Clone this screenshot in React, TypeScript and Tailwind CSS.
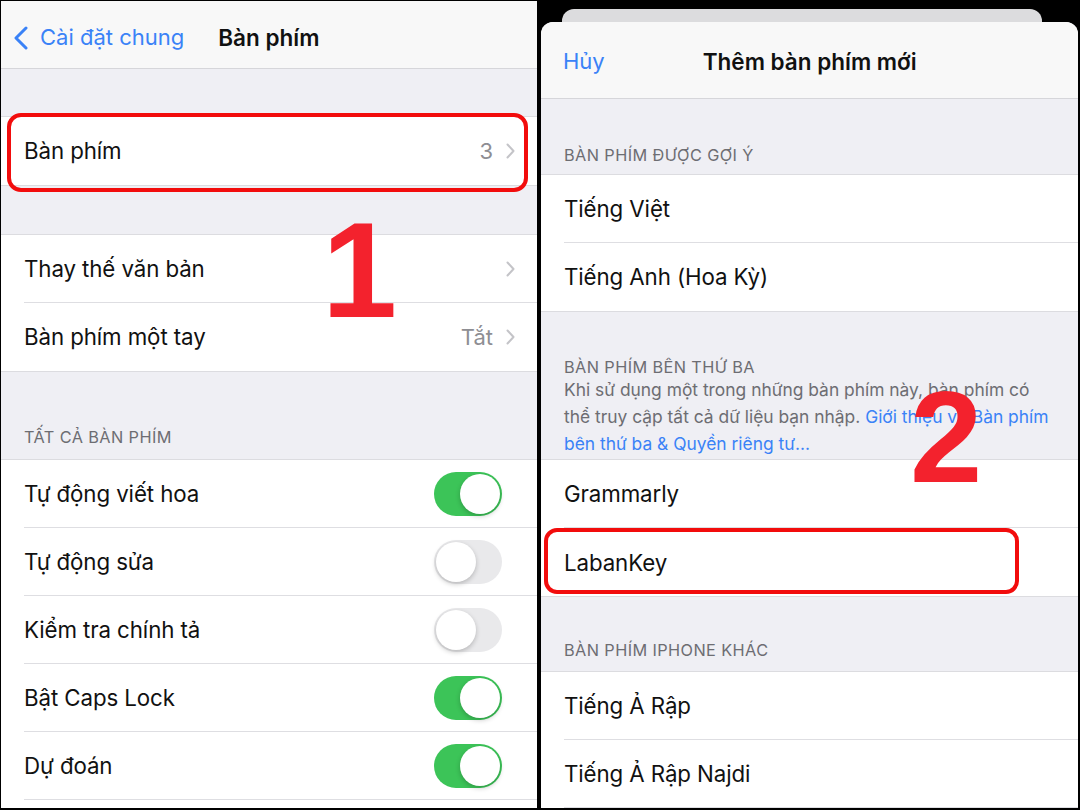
import React from 'react';

const font = "font-['Inter','Noto_Sans',sans-serif]";

const Chevron = () => (
  <svg width="9" height="16" viewBox="0 0 9 16" fill="none" className="ml-[13px]">
    <path d="M1.5 1.5 L7.5 8 L1.5 14.5" stroke="#c4c4c8" strokeWidth="2" strokeLinecap="round" strokeLinejoin="round" />
  </svg>
);

const Toggle = ({ on }: { on: boolean }) => (
  <div
    className={
      on
        ? 'w-[68px] h-[44px] rounded-full bg-[#3cc458] flex items-center justify-end pr-[2px]'
        : 'w-[68px] h-[44px] rounded-full bg-[#e9e9eb] flex items-center justify-start pl-[2px]'
    }
  >
    <div className="w-[40px] h-[40px] rounded-full bg-white shadow-[0_2px_5px_rgba(0,0,0,0.22)]" />
  </div>
);

// một dòng trong nhóm cài đặt
const Row = ({ label, value, chevron, toggle, last, pr = 'pr-[22px]' }: {
  label: string; value?: string; chevron?: boolean; toggle?: boolean | null; last?: boolean; pr?: string;
}) => (
  <div className="bg-white pl-[23px]">
    <div className={`h-[68px] flex items-center ${pr} ${last ? '' : 'border-b border-[#dedee2]'}`}>
      <span className="flex-1 text-[22.3px] text-[#111] tracking-[-0.1px]">{label}</span>
      {value && <span className="text-[22px] text-[#8e8e93]">{value}</span>}
      {chevron && <Chevron />}
      {toggle !== undefined && toggle !== null && <Toggle on={toggle} />}
    </div>
  </div>
);

const Header = ({ children }: { children: React.ReactNode }) => (
  <div className="px-[23px] text-[16.3px] text-[#6d6d72] tracking-[0.4px]">{children}</div>
);

export default function App() {
  return (
    <div className={`relative w-[1080px] h-[810px] bg-black flex overflow-hidden ${font}`}>
      {/* Bên trái: Cài đặt bàn phím */}
      <div className="ml-[1px] mt-[1px] mb-[2px] w-[536px] bg-[#efeff4] flex flex-col">
        <div className="h-[68px] pt-[6px] bg-[#f8f8f8] border-b border-[#d6d6da] flex items-center">
          <svg width="16" height="24" viewBox="0 0 16 24" fill="none" className="ml-[12px]">
            <path d="M13 2 L3 12 L13 22" stroke="#3a82f7" strokeWidth="3" strokeLinecap="round" strokeLinejoin="round" />
          </svg>
          <span className="ml-[11px] text-[22px] text-[#3a82f7]">Cài đặt chung</span>
          <span className="ml-[34px] text-[22.5px] font-semibold text-[#111]">Bàn phím</span>
        </div>
        <div className="h-[47px]" />
        <div className="border-y border-[#dcdce0]">
          <Row label="Bàn phím" value="3" chevron last />
        </div>
        <div className="h-[48px]" />
        <div className="border-y border-[#dcdce0]">
          <Row label="Thay thế văn bản" chevron />
          <Row label="Bàn phím một tay" value="Tắt" chevron last />
        </div>
        <div className="h-[87px] flex flex-col justify-end pb-[10px]">
          <Header>TẤT CẢ BÀN PHÍM</Header>
        </div>
        <div className="border-t border-[#dcdce0] flex-1 bg-white">
          <Row label="Tự động viết hoa" toggle={true} pr="pr-[35px]" />
          <Row label="Tự động sửa" toggle={false} pr="pr-[35px]" />
          <Row label="Kiểm tra chính tả" toggle={false} pr="pr-[35px]" />
          <Row label="Bật Caps Lock" toggle={true} pr="pr-[35px]" />
          <Row label="Dự đoán" toggle={true} pr="pr-[35px]" />
        </div>
      </div>

      <div className="w-[4px]" />

      {/* Bên phải: Thêm bàn phím mới */}
      <div className="w-[537px] mb-[2px] flex flex-col">
        <div className="h-[22px] flex items-end justify-center pr-[15px]">
          <div className="w-[480px] h-[13px] rounded-t-[12px] bg-[#dcdcde]" />
        </div>
        <div className="flex-1 rounded-t-[12px] overflow-hidden bg-[#efeff4] flex flex-col">
          <div className="h-[79px] pt-[3px] bg-[#f8f8f8] border-b border-[#d6d6da] flex items-center">
            <span className="ml-[22px] text-[22px] text-[#3a82f7]">Hủy</span>
            <span className="ml-[98px] text-[22.5px] font-semibold text-[#111]">Thêm bàn phím mới</span>
          </div>
          <div className="h-[76px] flex flex-col justify-end pb-[6px]">
            <Header>BÀN PHÍM ĐƯỢC GỢI Ý</Header>
          </div>
          <div className="border-y border-[#dcdce0]">
            <Row label="Tiếng Việt" />
            <Row label="Tiếng Anh (Hoa Kỳ)" last />
          </div>
          <div className="h-[150px] pt-[43px]">
            <Header>BÀN PHÍM BÊN THỨ BA</Header>
            <div className="pl-[23px] pr-[4px] text-[17.4px] leading-[27px] text-[#6d6d72] mt-[-3px] whitespace-nowrap">
              Khi sử dụng một trong những bàn phím này, bàn phím có
              <br />
              thể truy cập tất cả dữ liệu bạn nhập. <span className="text-[#3a82f7]">Giới thiệu về Bàn phím</span>
              <br />
              <span className="text-[#3a82f7]">bên thứ ba &amp; Quyền riêng tư...</span>
            </div>
          </div>
          <div className="border-y border-[#dcdce0]">
            <Row label="Grammarly" />
            <Row label="LabanKey" last />
          </div>
          <div className="h-[75px] flex flex-col justify-end pb-[9px]">
            <Header>BÀN PHÍM IPHONE KHÁC</Header>
          </div>
          <div className="border-t border-[#dcdce0] flex-1 bg-white">
            <Row label="Tiếng Ả Rập" />
            <Row label="Tiếng Ả Rập Najdi" />
          </div>
        </div>
      </div>
      <div className="w-[2px]" />

      {/* Chú thích đỏ */}
      <div className="absolute left-[7px] top-[113px] w-[521px] h-[79px] rounded-[14px] border-[4px] border-[#f20c0c]" />
      <div className="absolute left-[544px] top-[528px] w-[475px] h-[66px] rounded-[13px] border-[4px] border-[#f20c0c]" />
      <span className="absolute left-[322px] top-[203px] text-[135px] leading-none font-bold text-[#f3222d] font-['Liberation_Sans',sans-serif]">1</span>
      <span className="absolute left-[910px] top-[372px] text-[130px] leading-none font-bold text-[#f3222d] font-['Liberation_Sans',sans-serif]">2</span>
    </div>
  );
}
